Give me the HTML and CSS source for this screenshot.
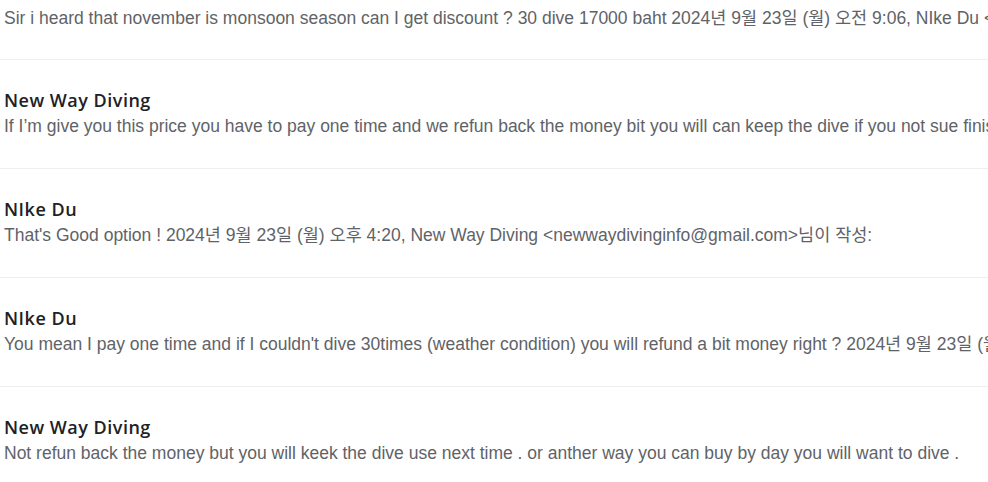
FILE: index.html
```html
<!DOCTYPE html>
<html lang="ko">
<head>
<meta charset="utf-8">
<link rel="stylesheet" href="styles.css">
</head>
<body>
<div class="thread">
  <div class="msg first">
    <div class="snippet">Sir i heard that november is monsoon season can I get discount ? 30 dive 17000 baht 2024년 9월 23일 (월) 오전 9:06, NIke Du &lt;nikedu@gmail.com&gt;님이 작성:</div>
  </div>
  <div class="msg">
    <div class="sender">New Way Diving</div>
    <div class="snippet">If I’m give you this price you have to pay one time and we refun back the money bit you will can keep the dive if you not sue finish all 30 dive</div>
  </div>
  <div class="msg">
    <div class="sender">NIke Du</div>
    <div class="snippet">That's Good option ! 2024년 9월 23일 (월) 오후 4:20, New Way Diving &lt;newwaydivinginfo@gmail.com&gt;님이 작성:</div>
  </div>
  <div class="msg">
    <div class="sender">NIke Du</div>
    <div class="snippet">You mean I pay one time and if I couldn't dive 30times (weather condition) you will refund a bit money right ? 2024년 9월 23일 (월) 오후 4:25</div>
  </div>
  <div class="msg">
    <div class="sender">New Way Diving</div>
    <div class="snippet">Not refun back the money but you will keek the dive use next time . or anther way you can buy by day you will want to dive .</div>
  </div>
</div>
</body>
</html>
```
FILE: styles.css
```css
html, body {
  margin: 0;
  padding: 0;
  background: #ffffff;
}
.thread {
  width: 988px;
  overflow: hidden;
}
.msg {
  border-top: 1px solid #eeeeee;
  padding: 28px 0 30px 4px;
  white-space: nowrap;
  overflow: hidden;
}
.msg.first {
  border-top: none;
  padding-top: 6px;
  padding-bottom: 29px;
}
.sender {
  font-family: "Open Sans", "Noto Sans", sans-serif;
  font-weight: 600;
  font-size: 18px;
  letter-spacing: 0.5px;
  line-height: 24px;
  color: #202124;
}
.snippet {
  font-family: "Liberation Sans", Arial, "Noto Sans CJK KR", sans-serif;
  font-size: 17.5px;
  line-height: 24px;
  color: #5f6368;
  margin-top: 2px;
}
.msg.first .snippet {
  margin-top: 0;
}
```
